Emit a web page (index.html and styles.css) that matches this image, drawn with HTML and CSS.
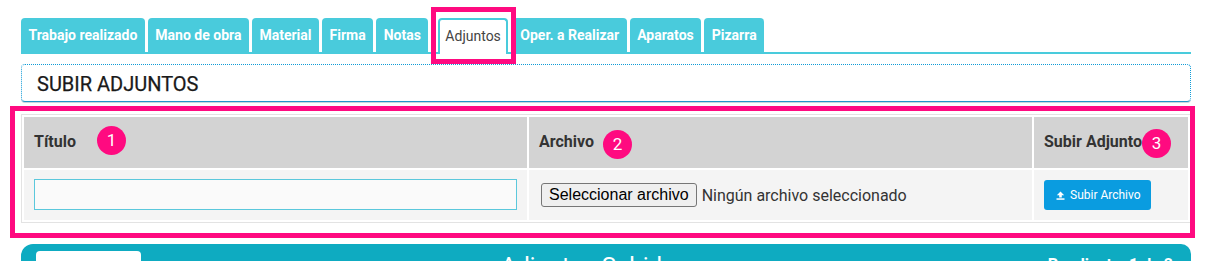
FILE: index.html
```html
<!DOCTYPE html>
<html lang="es">
<head>
  <meta charset="UTF-8">
  <meta name="viewport" content="width=device-width, initial-scale=1.0">
  <title>Adjuntos</title>
  <link rel="stylesheet" href="styles.css">
</head>
<body>
<div class="page">
  <ul class="tabs">
    <li class="tab">Trabajo realizado</li>
    <li class="tab">Mano de obra</li>
    <li class="tab">Material</li>
    <li class="tab">Firma</li>
    <li class="tab">Notas</li>
    <li class="tab active">Adjuntos<span class="mark mark-tab"></span></li>
    <li class="tab">Oper. a Realizar</li>
    <li class="tab">Aparatos</li>
    <li class="tab">Pizarra</li>
  </ul>

  <div class="panel-title">SUBIR ADJUNTOS</div>

  <div class="upload-wrap">
    <table class="upload-table">
      <colgroup>
        <col class="col-title">
        <col class="col-file">
        <col class="col-send">
      </colgroup>
      <thead>
        <tr>
          <th>Título<span class="badge badge-1">1</span></th>
          <th>Archivo<span class="badge badge-2">2</span></th>
          <th>Subir Adjunto<span class="badge badge-3">3</span></th>
        </tr>
      </thead>
      <tbody>
        <tr>
          <td><input type="text" class="title-input"></td>
          <td>
            <label class="file-field">
              <span class="file-button">Seleccionar archivo</span>
              <span class="file-name">Ningún archivo seleccionado</span>
            </label>
          </td>
          <td>
            <button class="send-button">
              <svg class="upload-icon" width="9" height="9" viewBox="0 0 9 9">
                <path d="M4.5 0.5 L8.2 4.3 H5.8 V6.6 H3.2 V4.3 H0.8 Z" fill="#fff"/>
                <rect x="0.5" y="7.3" width="8" height="1.5" fill="#fff"/>
              </svg>
              Subir Archivo
            </button>
          </td>
        </tr>
      </tbody>
    </table>
  </div>

  <div class="list-bar">
    <div class="list-select"></div>
    <h2>Adjuntos Subidos</h2>
    <div class="list-info">Pendiente: 1 de 2</div>
  </div>
</div>
</body>
</html>
```

FILE: styles.css
```css
:root {
  --tab-color: #49cbdc;
  --bar-color: #0eabc1;
  --mark-color: #ff0a80;
  --button-color: #0a9ce0;
  --text-color: #333333;
}

body {
  margin: 0;
  font-family: Roboto, "Liberation Sans", Arial, sans-serif;
  color: var(--text-color);
  background: #ffffff;
}

.page {
  width: 1170px;
  padding: 18px 0 0 21px;
}

/* pestañas */
.tabs {
  display: flex;
  list-style: none;
  margin: 0;
  padding: 0;
  border-bottom: 2px solid var(--tab-color);
  height: 34px;
}

.tab {
  height: 34px;
  line-height: 34px;
  padding: 0 7.5px;
  margin-right: 3px;
  background: var(--tab-color);
  color: #ffffff;
  font-size: 14px;
  font-weight: 700;
  border-radius: 4px 4px 0 0;
  white-space: nowrap;
}

.tab.active {
  position: relative;
  background: #ffffff;
  color: #444444;
  font-size: 14px;
  font-weight: 400;
  border: 2px solid var(--tab-color);
  border-bottom: none;
  height: 34px;
  line-height: 32px;
  padding: 0 5px;
  margin: 0 5px 0 7px;
}

.mark {
  position: absolute;
  border: 5px solid var(--mark-color);
  pointer-events: none;
}

.mark-tab {
  top: -13px;
  left: -9px;
  right: -10px;
  bottom: -10px;
}

/* titulo del panel */
.panel-title {
  margin-top: 10px;
  height: 33px;
  padding: 3px 15px 0;
  line-height: 32px;
  border: 1px dotted #0f9bd7;
  border-bottom: 1px solid #2196c8;
  border-radius: 4px;
  box-shadow: 0 1px 0 #c9d6dc;
  font-size: 20px;
  font-weight: 400;
  color: #1a1a1a;
  -webkit-text-stroke: 0.25px #1a1a1a;
}

/* tabla de subida */
.upload-wrap {
  position: relative;
  margin-top: 12px;
}

.upload-wrap::after {
  content: "";
  position: absolute;
  top: -8px;
  left: -11px;
  right: -4px;
  bottom: -15px;
  border: 5px solid var(--mark-color);
  pointer-events: none;
}

.upload-table {
  width: 1170px;
  table-layout: fixed;
  border-collapse: separate;
  border-spacing: 2px;
  border: 1px solid #e3e3e3;
}

.col-title, .col-file {
  width: 503px;
}

.upload-table th {
  position: relative;
  height: 51px;
  box-sizing: border-box;
  padding: 0 10px 2px;
  background: #d3d3d3;
  text-align: left;
  font-size: 16px;
  font-weight: 700;
  color: #333333;
}

.upload-table td {
  height: 50px;
  box-sizing: border-box;
  padding: 0 10px;
  background: #f4f4f4;
}

.badge {
  position: absolute;
  width: 29px;
  height: 29px;
  border-radius: 50%;
  background: var(--mark-color);
  color: #ffffff;
  font-size: 17px;
  font-weight: 400;
  line-height: 29px;
  text-align: center;
}

.badge-1 { left: 73px; top: 9px; }
.badge-2 { left: 74px; top: 13px; }
.badge-3 { left: 108px; top: 12px; }

.title-input {
  display: block;
  width: 100%;
  height: 31px;
  margin: 0 0 1px;
  box-sizing: border-box;
  border: 1px solid #5bc8dc;
  background: #fafafa;
}

.file-field {
  display: flex;
  align-items: center;
  gap: 5px;
  margin-left: 2px;
  font-family: "Liberation Sans", Arial, sans-serif;
  font-size: 16px;
  color: #222222;
}

.file-button {
  height: 22px;
  line-height: 22px;
  padding: 0 7px;
  background: #efefef;
  border: 1px solid #767676;
  border-radius: 3px;
  color: #000000;
}

.file-name {
  font-family: Roboto, "Liberation Sans", Arial, sans-serif;
  color: #333333;
}

.send-button {
  display: flex;
  align-items: center;
  gap: 5px;
  height: 30px;
  padding: 0 10px 0 12px;
  border: none;
  border-radius: 3px;
  background: var(--button-color);
  color: #ffffff;
  font-family: Roboto, "Liberation Sans", Arial, sans-serif;
  font-size: 12px;
}

/* barra de adjuntos subidos */
.list-bar {
  display: flex;
  align-items: flex-start;
  margin-top: 21px;
  height: 60px;
  padding: 7px 18px 0 15px;
  background: var(--bar-color);
  border-radius: 12px 10px 0 0;
  color: #ffffff;
}

.list-select {
  width: 105px;
  height: 34px;
  background: #ffffff;
  border-radius: 4px;
}

.list-bar h2 {
  flex: 1;
  margin: 0;
  text-align: center;
  font-size: 24px;
  font-weight: 400;
  line-height: 30px;
}

.list-info {
  margin-top: 4px;
  font-size: 16px;
  font-weight: 700;
  line-height: 20px;
}
```
